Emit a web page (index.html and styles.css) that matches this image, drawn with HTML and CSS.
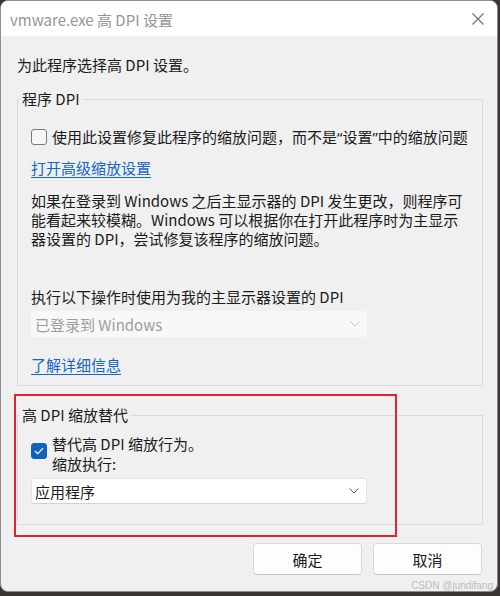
FILE: index.html
```html
<!DOCTYPE html>
<html lang="zh-CN">
<head>
<meta charset="utf-8">
<title>vmware.exe 高 DPI 设置</title>
<link rel="stylesheet" href="styles.css">
</head>
<body>
<div class="window">
  <div class="titlebar">
    <span class="title">vmware.exe 高 DPI 设置</span>
    <svg class="close" width="12" height="12" viewBox="0 0 12 12"><path d="M0.5 0.5 L11.5 11.5 M11.5 0.5 L0.5 11.5" stroke="#6e6e6e" stroke-width="1.1" fill="none"/></svg>
  </div>
  <div class="content">
    <p class="intro">为此程序选择高 DPI 设置。</p>
    <fieldset class="group group-program">
      <legend>程序 DPI</legend>
      <div class="check-row">
        <span class="box"></span>
        <span class="check-text narrow-quotes">使用此设置修复此程序的缩放问题，而不是“设置”中的缩放问题</span>
      </div>
      <a class="link link-advanced">打开高级缩放设置</a>
      <p class="desc">如果在登录到 Windows 之后主显示器的 DPI 发生更改，则程序可<br>能看起来较模糊。Windows 可以根据你在打开此程序时为主显示<br>器设置的 DPI，尝试修复该程序的缩放问题。</p>
      <p class="field-label">执行以下操作时使用为我的主显示器设置的 DPI</p>
      <div class="select select-disabled">
        <span>已登录到 Windows</span>
        <svg class="chev" width="10" height="6" viewBox="0 0 10 6"><path d="M0.5 0.5 L5 5 L9.5 0.5" stroke="#c4c4c4" stroke-width="1" fill="none"/></svg>
      </div>
      <a class="link link-more">了解详细信息</a>
    </fieldset>
    <fieldset class="group group-override">
      <legend>高 DPI 缩放替代</legend>
      <div class="check-row check-row-two">
        <span class="box box-checked"><svg width="10" height="8" viewBox="0 0 10 8"><path d="M1 4 L3.8 6.6 L9 1.2" stroke="#fff" stroke-width="1.2" fill="none"/></svg></span>
        <span class="check-text">替代高 DPI 缩放行为。<br>缩放执行:</span>
      </div>
      <div class="select select-active">
        <span>应用程序</span>
        <svg class="chev" width="10" height="6" viewBox="0 0 10 6"><path d="M0.5 0.5 L5 5 L9.5 0.5" stroke="#5c5c5c" stroke-width="1" fill="none"/></svg>
      </div>
    </fieldset>
    <div class="buttons">
      <button class="btn">确定</button>
      <button class="btn">取消</button>
    </div>
  </div>
  <div class="highlight"></div>
  <span class="watermark">CSDN @jundifang</span>
</div>
</body>
</html>
```
FILE: styles.css
```css
html, body {
  margin: 0;
  padding: 0;
}
body {
  background: #3a3532;
  width: 500px;
  height: 596px;
  overflow: hidden;
  font-family: "Noto Sans CJK SC", "Noto Sans", sans-serif;
  font-size: 15px;
  color: #1b1b1b;
}
.window {
  position: relative;
  box-sizing: border-box;
  width: 498px;
  height: 592px;
  border: 1px solid #8e8e8e;
  border-radius: 8px;
  background: #f0f0f0;
  overflow: hidden;
}
.titlebar {
  height: 35px;
  background: #ffffff;
  display: flex;
  align-items: center;
  justify-content: space-between;
  padding: 0 13px 0 9px;
}
.title {
  color: #959595;
  font-size: 15px;
  line-height: 20px;
  margin-top: 2px;
}
.close {
  display: block;
  margin-top: 1px;
}
.content {
  padding: 19px 14px 0 16px;
}
p {
  margin: 0;
}
.intro {
  line-height: 20px;
}
.group {
  margin: 0;
  min-width: 0;
  border: 1px solid #dadada;
  border-radius: 1px;
  padding: 0 13px;
}
.group legend {
  padding: 0 2px;
  margin-left: -11px;
  line-height: 20px;
}
.group-program {
  margin-top: 14px;
  padding-top: 18px;
  padding-bottom: 10px;
}
.check-row {
  display: flex;
  align-items: center;
  line-height: 20px;
}
.box {
  box-sizing: border-box;
  flex: none;
  width: 16px;
  height: 16px;
  border: 1px solid #7a7a7a;
  border-radius: 3px;
  background: #f6f6f6;
  margin-right: 5px;
  display: flex;
  align-items: center;
  justify-content: center;
}
.box-checked {
  background: #0f62c0;
  border-color: #0f62c0;
}
.check-text {
  white-space: nowrap;
}
.narrow-quotes {
  font-family: "Noto Sans", "Noto Sans CJK SC", sans-serif;
}
.link {
  display: block;
  width: max-content;
  color: #1467c8;
  text-decoration: underline;
  text-underline-offset: 3px;
  line-height: 20px;
}
.link-advanced {
  margin-top: 11px;
}
.desc {
  margin-top: 13px;
  line-height: 19px;
  white-space: nowrap;
}
.field-label {
  margin-top: 39px;
  line-height: 20px;
}
.select {
  box-sizing: border-box;
  width: 336px;
  height: 26px;
  display: flex;
  align-items: center;
  justify-content: space-between;
  padding: 0 7px 0 4px;
  margin-top: 4px;
  border-radius: 3px;
}
.select-disabled {
  background: #f8f8f8;
  color: #9d9d9d;
}
.select-active {
  background: #ffffff;
  border: 1px solid #e3e3e3;
  border-bottom-color: #d2d2d2;
  padding-left: 3px;
}
.chev {
  display: block;
}
.link-more {
  margin-top: 18px;
}
.group-override {
  margin-top: 19px;
  padding-top: 9px;
  padding-bottom: 20px;
}
.check-row-two {
  align-items: flex-start;
}
.check-row-two .box {
  margin-top: 9px;
}
.buttons {
  display: flex;
  justify-content: flex-end;
  gap: 11px;
  margin-top: 18px;
  padding-right: 1px;
}
.btn {
  box-sizing: border-box;
  width: 109px;
  height: 32px;
  background: #fdfdfd;
  border: 1px solid #d8d8d8;
  border-bottom-color: #c4c4c4;
  border-radius: 4px;
  font-family: inherit;
  font-size: 15px;
  color: #1b1b1b;
  padding: 0;
}
.highlight {
  position: absolute;
  left: 13px;
  top: 393px;
  width: 383px;
  height: 143px;
  box-sizing: border-box;
  border: 2px solid #e3212f;
}
.watermark {
  position: absolute;
  right: 4px;
  bottom: -1px;
  font-family: "Liberation Sans", sans-serif;
  font-size: 10px;
  line-height: 12px;
  color: #bdbdbd;
}
```
